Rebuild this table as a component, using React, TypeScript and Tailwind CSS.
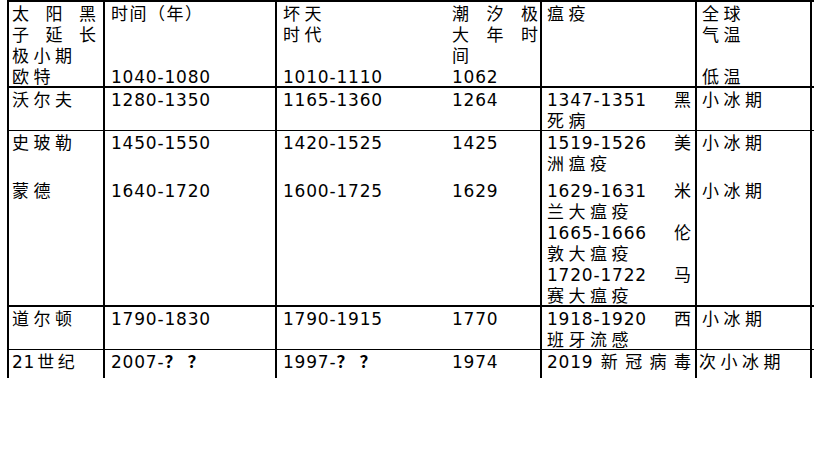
import React from "react";

const N = ({ c }: { c: string }) => (
  <span className="font-['DejaVu_Sans',sans-serif] text-[17px] tracking-[0.8px]">{c}</span>
);

const L = ({ children, j, w }: { children?: React.ReactNode; j?: boolean; w?: string }) => (
  <div
    className={
      j
        ? "flex h-[21px] items-baseline justify-between whitespace-nowrap leading-[21px] tracking-normal " + (w || "")
        : "h-[21px] whitespace-nowrap leading-[21px]"
    }
  >
    {children}
  </div>
);

const Gap = () => <div className="h-[6px]" />;

const JC = ({ s, w }: { s: string; w: string }) => (
  <L j w={w}>
    {s.split("").map((ch, i) => (
      <span key={i}>{ch}</span>
    ))}
  </L>
);

const C1 = ({ children }: { children?: React.ReactNode }) => (
  <div className="w-[96px] shrink-0 border-l-2 border-black pl-[3px]">{children}</div>
);
const C2 = ({ children }: { children?: React.ReactNode }) => (
  <div className="w-[172px] shrink-0 border-l-2 border-black pl-[6px]">{children}</div>
);
const C3 = ({ children }: { children?: React.ReactNode }) => (
  <div className="w-[171px] shrink-0 border-l-2 border-black pl-[6px]">{children}</div>
);
const C4 = ({ children }: { children?: React.ReactNode }) => (
  <div className="w-[94px] shrink-0 pl-[6px]">{children}</div>
);
const C5 = ({ children }: { children?: React.ReactNode }) => (
  <div className="w-[155px] shrink-0 border-l-2 border-black pl-[5px] pr-[4px]">{children}</div>
);
const C6 = ({ children }: { children?: React.ReactNode }) => (
  <div className="w-[117px] shrink-0 border-x-2 border-black pl-[5px]">{children}</div>
);

export default function App() {
  return (
    <div className="h-[460px] w-[819px] bg-white pl-[7px] font-['Noto_Sans_CJK_SC',sans-serif] text-[17px] tracking-[4.5px] text-black">
      <div className="w-[807px]">
        {/* header */}
        <div className="flex border-t-2 border-black">
          <C1>
            <JC s="太阳黑" w="w-[84px]" />
            <JC s="子延长" w="w-[84px]" />
            <L>极小期</L>
            <L>欧特</L>
          </C1>
          <C2>
            <L>
              <span className="tracking-[1.5px]">时间（年）</span>
            </L>
            <L />
            <L />
            <L>
              <N c="1040-1080" />
            </L>
          </C2>
          <C3>
            <L>坏天</L>
            <L>时代</L>
            <L />
            <L>
              <N c="1010-1110" />
            </L>
          </C3>
          <C4>
            <JC s="潮汐极" w="w-[86px]" />
            <JC s="大年时" w="w-[86px]" />
            <L>间</L>
            <L>
              <N c="1062" />
            </L>
          </C4>
          <C5>
            <L>瘟疫</L>
          </C5>
          <C6>
            <L>全球</L>
            <L>气温</L>
            <L />
            <L>低温</L>
          </C6>
        </div>

        {/* 沃尔夫 */}
        <div className="flex border-t-2 border-black">
          <C1>
            <L>沃尔夫</L>
            <L />
          </C1>
          <C2>
            <L>
              <N c="1280-1350" />
            </L>
          </C2>
          <C3>
            <L>
              <N c="1165-1360" />
            </L>
          </C3>
          <C4>
            <L>
              <N c="1264" />
            </L>
          </C4>
          <C5>
            <L j>
              <N c="1347-1351" />
              <span>黑</span>
            </L>
            <L>死病</L>
          </C5>
          <C6>
            <L>小冰期</L>
          </C6>
        </div>

        {/* 史玻勒 / 蒙德 */}
        <div className="flex border-t border-black">
          <C1>
            <L>史玻勒</L>
            <L />
            <Gap />
            <L>蒙德</L>
          </C1>
          <C2>
            <L>
              <N c="1450-1550" />
            </L>
            <L />
            <Gap />
            <L>
              <N c="1640-1720" />
            </L>
          </C2>
          <C3>
            <L>
              <N c="1420-1525" />
            </L>
            <L />
            <Gap />
            <L>
              <N c="1600-1725" />
            </L>
          </C3>
          <C4>
            <L>
              <N c="1425" />
            </L>
            <L />
            <Gap />
            <L>
              <N c="1629" />
            </L>
          </C4>
          <C5>
            <L j>
              <N c="1519-1526" />
              <span>美</span>
            </L>
            <L>洲瘟疫</L>
            <Gap />
            <L j>
              <N c="1629-1631" />
              <span>米</span>
            </L>
            <L>兰大瘟疫</L>
            <L j>
              <N c="1665-1666" />
              <span>伦</span>
            </L>
            <L>敦大瘟疫</L>
            <L j>
              <N c="1720-1722" />
              <span>马</span>
            </L>
            <L>赛大瘟疫</L>
          </C5>
          <C6>
            <L>小冰期</L>
            <L />
            <Gap />
            <L>小冰期</L>
          </C6>
        </div>

        {/* 道尔顿 */}
        <div className="flex border-t-2 border-black">
          <C1>
            <L>道尔顿</L>
          </C1>
          <C2>
            <L>
              <N c="1790-1830" />
            </L>
          </C2>
          <C3>
            <L>
              <N c="1790-1915" />
            </L>
          </C3>
          <C4>
            <L>
              <N c="1770" />
            </L>
          </C4>
          <C5>
            <L j>
              <N c="1918-1920" />
              <span>西</span>
            </L>
            <L>班牙流感</L>
          </C5>
          <C6>
            <L>小冰期</L>
          </C6>
        </div>

        {/* 21世纪 */}
        <div className="flex h-[29px] overflow-hidden border-t border-black">
          <C1>
            <L>
              <N c="21" />
              <span className="ml-[2px] tracking-[3.5px]">世纪</span>
            </L>
          </C1>
          <C2>
            <L>
              <N c="2007-" />
              <span className="font-semibold tracking-[6px]">？？</span>
            </L>
          </C2>
          <C3>
            <L>
              <N c="1997-" />
              <span className="font-semibold tracking-[6px]">？？</span>
            </L>
          </C3>
          <C4>
            <L>
              <N c="1974" />
            </L>
          </C4>
          <C5>
            <L j>
              <N c="2019" />
              <span>新</span>
              <span>冠</span>
              <span>病</span>
              <span>毒</span>
            </L>
          </C5>
          <C6>
            <div className="-ml-[3px]">
              <L>次小冰期</L>
            </div>
          </C6>
        </div>
      </div>
    </div>
  );
}
